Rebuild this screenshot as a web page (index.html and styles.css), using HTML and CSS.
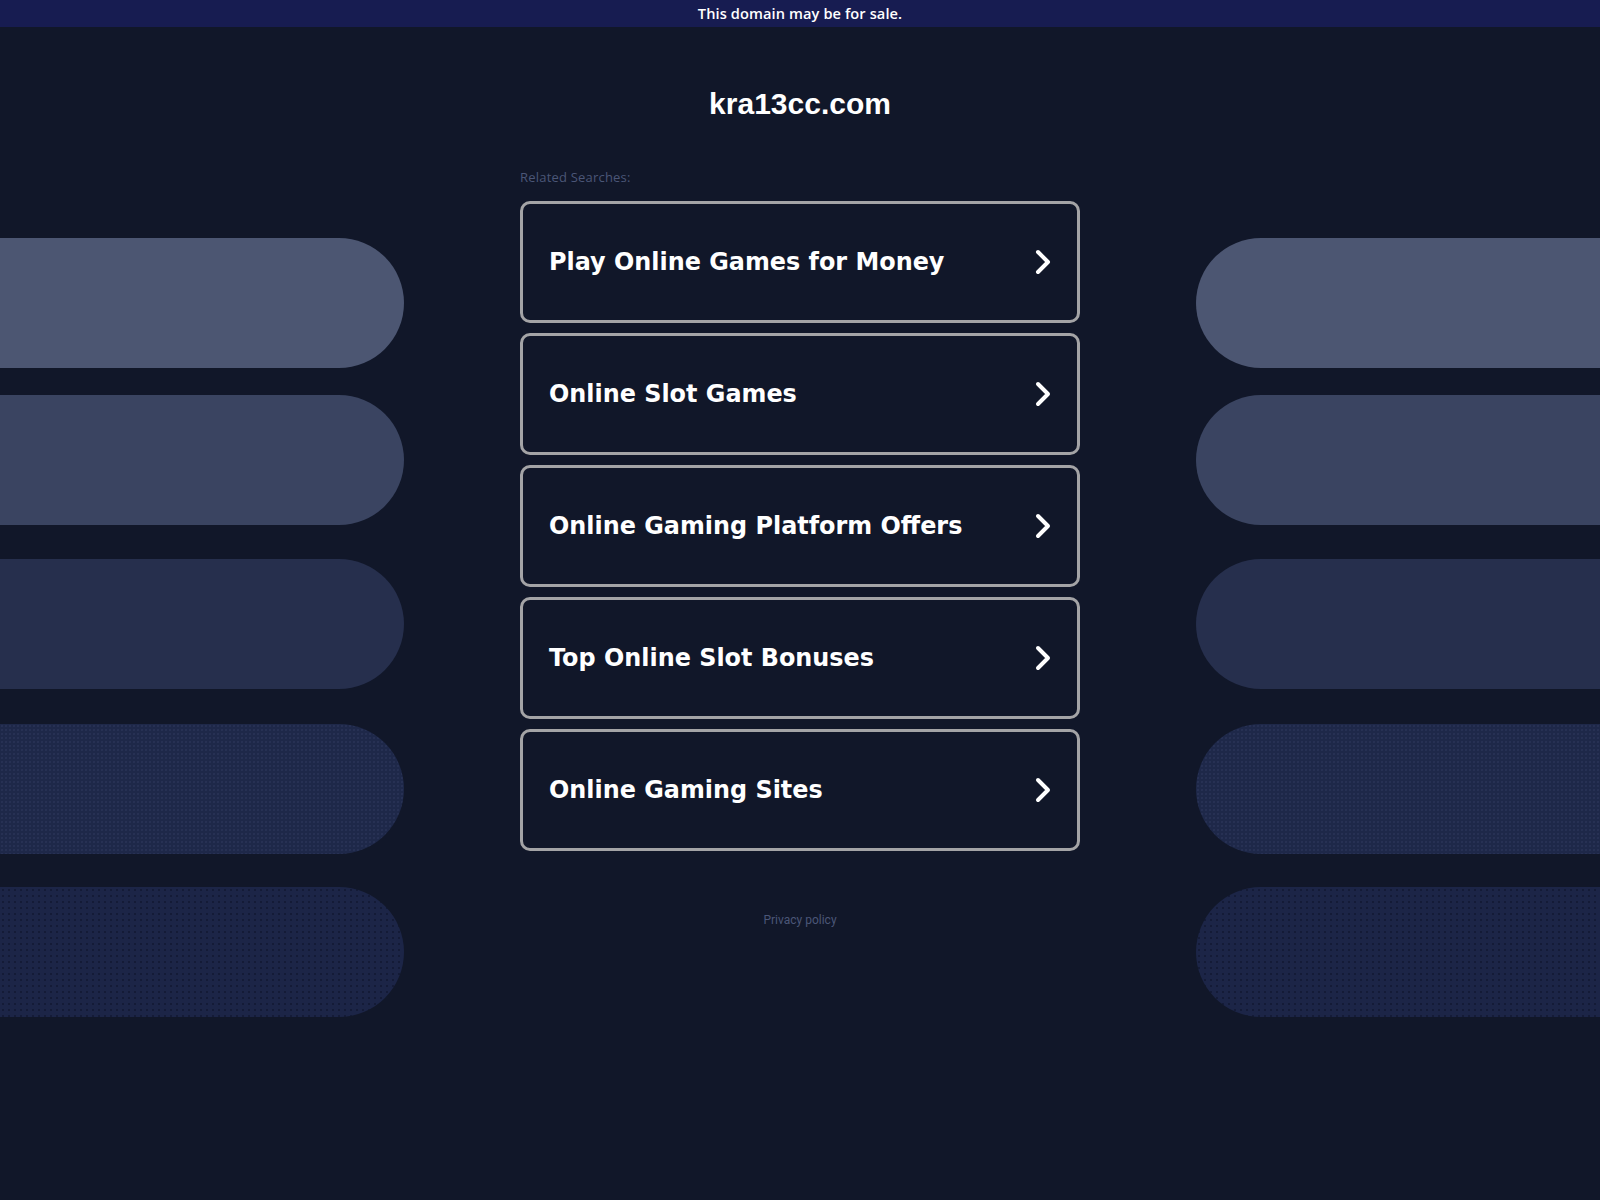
FILE: index.html
```html
<!DOCTYPE html>
<html lang="en">
<head>
<meta charset="utf-8">
<title>kra13cc.com</title>
<link rel="stylesheet" href="styles.css">
</head>
<body>
<div class="topbar">This domain may be for sale.</div>
<div class="layout">
  <div class="pills pills-left">
    <div class="pill p1"></div>
    <div class="pill p2"></div>
    <div class="pill p3"></div>
    <div class="pill p4"></div>
    <div class="pill p5"></div>
  </div>
  <main class="center">
    <h1 class="domain">kra13cc.com</h1>
    <div class="related">Related Searches:</div>
    <div class="cards">
      <a class="card" href="#"><span>Play Online Games for Money</span><svg class="chev" viewBox="0 0 16 26" width="16" height="26"><path d="M3 3 L13 13 L3 23" fill="none" stroke="#fff" stroke-width="4" stroke-linecap="round" stroke-linejoin="round"/></svg></a>
      <a class="card" href="#"><span>Online Slot Games</span><svg class="chev" viewBox="0 0 16 26" width="16" height="26"><path d="M3 3 L13 13 L3 23" fill="none" stroke="#fff" stroke-width="4" stroke-linecap="round" stroke-linejoin="round"/></svg></a>
      <a class="card" href="#"><span>Online Gaming Platform Offers</span><svg class="chev" viewBox="0 0 16 26" width="16" height="26"><path d="M3 3 L13 13 L3 23" fill="none" stroke="#fff" stroke-width="4" stroke-linecap="round" stroke-linejoin="round"/></svg></a>
      <a class="card" href="#"><span>Top Online Slot Bonuses</span><svg class="chev" viewBox="0 0 16 26" width="16" height="26"><path d="M3 3 L13 13 L3 23" fill="none" stroke="#fff" stroke-width="4" stroke-linecap="round" stroke-linejoin="round"/></svg></a>
      <a class="card" href="#"><span>Online Gaming Sites</span><svg class="chev" viewBox="0 0 16 26" width="16" height="26"><path d="M3 3 L13 13 L3 23" fill="none" stroke="#fff" stroke-width="4" stroke-linecap="round" stroke-linejoin="round"/></svg></a>
    </div>
    <a class="privacy" href="#">Privacy policy</a>
  </main>
  <div class="pills pills-right">
    <div class="pill p1"></div>
    <div class="pill p2"></div>
    <div class="pill p3"></div>
    <div class="pill p4"></div>
    <div class="pill p5"></div>
  </div>
</div>
</body>
</html>
```

FILE: styles.css
```css
html, body {
  margin: 0;
  padding: 0;
  background: #111729;
  height: 100%;
}
body {
  font-family: "Open Sans", "DejaVu Sans", sans-serif;
  color: #fff;
  min-height: 1200px;
}
.topbar {
  height: 27px;
  line-height: 26px;
  background: #171c51;
  color: #fff;
  text-align: center;
  font-family: "Open Sans", sans-serif;
  font-size: 14.6px;
  font-weight: 600;
  letter-spacing: 0.1px;
}
.layout {
  display: grid;
  grid-template-columns: 404px 1fr 404px;
}
.pills {
  display: flex;
  flex-direction: column;
  padding-top: 211px;
}
.pill {
  height: 130px;
}
.pills-left .pill {
  border-radius: 0 65px 65px 0;
}
.pills-right .pill {
  border-radius: 65px 0 0 65px;
}
.p1 { background: #4c5672; }
.p2 { background: #3a4461; margin-top: 27px; }
.p3 { background: #262f4d; margin-top: 34px; }
.p4 {
  background-color: #1e2849;
  background-image: radial-gradient(rgba(55, 66, 104, 0.35) 0.7px, transparent 1.1px);
  background-size: 4px 4px;
  margin-top: 35px;
}
.p5 {
  background-color: #1c2547;
  background-image: radial-gradient(rgba(12, 18, 40, 0.5) 0.8px, transparent 1.2px);
  background-size: 6px 6px;
  margin-top: 33px;
}
.center {
  display: flex;
  flex-direction: column;
  align-items: center;
}
.domain {
  margin: 59px 0 0;
  font-family: "Liberation Sans", Arial, sans-serif;
  font-weight: 700;
  font-size: 30px;
  line-height: 36px;
  color: #fff;
}
.related {
  width: 560px;
  margin-top: 46px;
  font-family: "Open Sans", sans-serif;
  font-size: 13px;
  font-weight: 500;
  line-height: 18px;
  letter-spacing: 0.2px;
  color: #4b5677;
}
.cards {
  width: 560px;
  margin-top: 15px;
  display: flex;
  flex-direction: column;
  gap: 10px;
}
.card {
  box-sizing: border-box;
  height: 122px;
  border: 3px solid #a4a4a6;
  border-radius: 10px;
  display: flex;
  align-items: center;
  justify-content: space-between;
  padding: 0 26px 0 26px;
  text-decoration: none;
  color: #fff;
  font-family: "DejaVu Sans", Verdana, sans-serif;
  font-weight: 700;
  font-size: 23.9px;
}
.chev {
  display: block;
}
.privacy {
  margin-top: 62px;
  font-family: "Roboto", "Open Sans", sans-serif;
  font-size: 12px;
  color: #4b5677;
  text-decoration: none;
}
```
